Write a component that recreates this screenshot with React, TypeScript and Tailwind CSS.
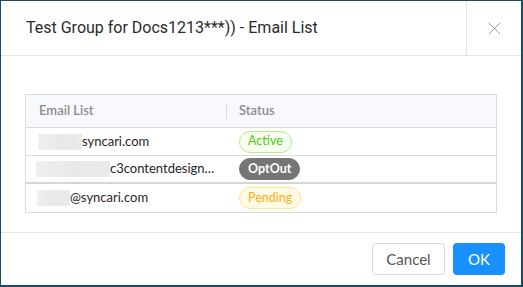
import { X } from 'lucide-react';

const rows = [
  { blur: 44, pad: 12, email: 'syncari.com', status: 'Active' },
  { blur: 74, pad: 10, email: 'c3contentdesign…', status: 'OptOut' },
  { blur: 33, pad: 11, email: '@syncari.com', status: 'Pending' },
];

function Badge({ status }: { status: string }) {
  if (status === 'Active')
    return <span className="inline-flex h-[22px] items-center rounded-full border border-[#b7eb8f] bg-[#f6ffed] px-[8px] text-[12.5px] text-[#52c41a]">Active</span>;
  if (status === 'OptOut')
    return <span className="inline-flex h-[22px] items-center rounded-full border border-[#757575] bg-[#757575] px-[8px] text-[12.5px] font-bold text-white">OptOut</span>;
  return <span className="inline-flex h-[22px] items-center rounded-full border border-[#ffe58f] bg-[#fffbe6] px-[8px] text-[12.5px] text-[#faad14]">Pending</span>;
}

export default function App() {
  return (
    <div className="flex h-[287px] w-[523px] flex-col border-t border-l border-r-2 border-b-2 border-[#1b4a62] bg-white">
      {/* header */}
      <div className="flex h-[55px] border-b border-[#e5e5e5]">
        <div className="flex flex-1 items-center pl-[25px] text-[16px] text-[#2b2b2b]" style={{ fontFamily: 'Roboto, sans-serif' }}>
          Test Group for Docs1213***)) - Email List
        </div>
        <div className="flex w-[55px] items-center justify-center border-l border-[#e5e5e5] text-[#999]">
          <X size={21} strokeWidth={1.1} />
        </div>
      </div>

      {/* body */}
      <div className="flex-1 px-[24px] pt-[38px]" style={{ fontFamily: 'Lato, sans-serif' }}>
        <div className="border border-[#dcdcdc]">
          <div className="flex h-[33px] items-center border-b border-[#dcdcdc] bg-[#f7f9fc] text-[13px] font-semibold text-[#8c8c8c]">
            <div className="w-[200px] pl-[13px]">Email List</div>
            <div className="h-[16px] border-l border-[#dcdcdc]" />
            <div className="pl-[12px]">Status</div>
          </div>
          {rows.map((r, i) => (
            <div
              key={i}
              className={`flex h-[28px] items-center text-[13px] text-[#262626] ${i === 0 ? 'border-b border-[#dcdcdc]' : i === 1 ? 'border-b-2 border-[#d6d6d6]' : ''}`}
            >
              <div className="flex w-[201px] items-center" style={{ paddingLeft: r.pad }}>
                <span
                  className="h-[16px] bg-gradient-to-r from-[#f0f0f0] via-[#e8e8e8] to-[#ebebeb]"
                  style={{ width: r.blur }}
                />
                <span>{r.email}</span>
              </div>
              <div className="pl-[12px]">
                <Badge status={r.status} />
              </div>
            </div>
          ))}
        </div>
      </div>

      {/* footer */}
      <div className="flex h-[53px] items-center justify-end gap-[8px] border-t border-[#e5e5e5] pr-[16px]" style={{ fontFamily: 'Lato, sans-serif' }}>
        <button className="h-[32px] w-[73px] rounded-[4px] border border-[#d9d9d9] bg-white text-[15px] text-[#555]">Cancel</button>
        <button className="h-[32px] w-[52px] rounded-[4px] bg-[#1890ff] text-[15px] text-white">OK</button>
      </div>
    </div>
  );
}
